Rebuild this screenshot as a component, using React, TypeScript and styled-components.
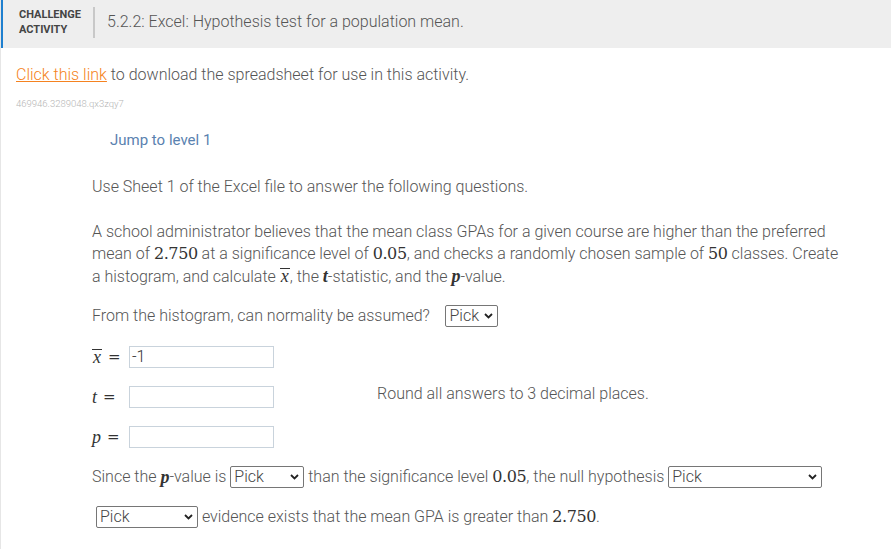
import React from "react";
import styled, { createGlobalStyle } from "styled-components";

const Global = createGlobalStyle`
  html, body { margin: 0; padding: 0; background: #fff; }
  body { font-family: Roboto, "Noto Sans", sans-serif; color: #555; font-weight: 300; }
  * { box-sizing: border-box; }
`;

const Page = styled.div`
  width: 891px;
  height: 549px;
  border-left: 1px solid #e6e6e6;
  overflow: hidden;
`;

const Header = styled.div`
  height: 48px;
  background: #eeeeee;
  border-left: 3px solid #1e7fcf;
  margin-left: -1px;
  display: flex;
  align-items: center;
  padding-left: 16px;
`;

const Label = styled.div`
  font-size: 11px;
  font-weight: 700;
  color: #444;
  line-height: 15px;
  padding-right: 12px;
  margin-top: -4px;
`;

const Divider = styled.div`
  width: 2px;
  height: 31px;
  background: #c8c8c8;
  margin-top: -3px;
`;

const Title = styled.div`
  font-size: 16px;
  font-weight: 300;
  color: #555;
  padding-left: 12px;
  margin-top: -5px;
`;

const Body = styled.div`
  padding: 16px 0 0 15px;
`;

const LinkLine = styled.div`
  font-size: 16px;
  line-height: 22px;
  color: #555;
`;

const Link = styled.a`
  color: #f58220;
  text-decoration: underline;
`;

const Ident = styled.div`
  font-size: 9.5px;
  color: #b5b5b5;
  margin-top: 12px;
`;

const Jump = styled.div`
  font-size: 15px;
  font-weight: 400;
  color: #5a82b0;
  margin: 22px 0 0 94px;
`;

const Content = styled.div`
  margin-left: 76px;
  width: 748px;
  font-size: 16px;
  line-height: 22.5px;
  color: #555;
`;

const Para = styled.p<{ $mt: number }>`
  margin: ${(p) => p.$mt}px 0 0 0;
`;

const Num = styled.span`
  font-family: "DejaVu Serif", "Liberation Serif", serif;
  font-size: 16px;
  line-height: 1;
  font-weight: 400;
  color: #333;
  letter-spacing: -0.4px;
`;

const Var = styled.span<{ $bold?: boolean }>`
  font-family: "Liberation Serif", "DejaVu Serif", serif;
  font-style: italic;
  font-size: 18px;
  line-height: 1;
  font-weight: ${(p) => (p.$bold ? 700 : 400)};
  color: #333;
`;

const Over = styled.span`
  display: inline-block;
  border-top: 1px solid #333;
  line-height: 0.8;
  padding: 0 1px;
`;

const Select = styled.span<{ $w: number }>`
  display: inline-flex;
  align-items: center;
  justify-content: space-between;
  width: ${(p) => p.$w}px;
  height: 22px;
  border: 1px solid #767676;
  border-radius: 2px;
  padding: 0 4px 0 3px;
  font-size: 16px;
  font-weight: 300;
  color: #444;
  vertical-align: middle;
  line-height: 20px;
  background: #fff;
`;

const Chevron = () => (
  <svg width="9" height="6" viewBox="0 0 9 6">
    <path d="M1 1l3.5 3.5L8 1" fill="none" stroke="#222" strokeWidth="1.8" />
  </svg>
);

const Pick = ({ w }: { w: number }) => (
  <Select $w={w}>
    Pick
    <Chevron />
  </Select>
);

const AnswerGrid = styled.div`
  display: grid;
  grid-template-columns: 285px 1fr;
  margin-top: 19px;
`;

const Answers = styled.div`
  display: flex;
  flex-direction: column;
  gap: 18px;
`;

const AnswerRow = styled.div`
  display: flex;
  align-items: center;
  height: 22px;
`;

const Sym = styled.span`
  width: 37px;
  display: inline-flex;
  align-items: center;
  gap: 6px;
  font-family: "Liberation Serif", "DejaVu Serif", serif;
  font-size: 18px;
  font-weight: 400;
  color: #333;
`;

const Eq = styled.span`
  font-family: "DejaVu Serif", serif;
  font-style: normal;
  font-size: 15px;
`;

const Input = styled.div`
  width: 145px;
  height: 22px;
  border: 1px solid #c9d3dc;
  font-size: 16px;
  line-height: 20px;
  padding-left: 2px;
  color: #333;
`;

const Note = styled.div`
  padding-top: 37px;
  font-size: 16px;
  color: #555;
`;

const Sentence = styled.div<{ $mt: number; $ml?: number }>`
  margin-top: ${(p) => p.$mt}px;
  margin-left: ${(p) => p.$ml || 0}px;
  height: 22px;
  display: flex;
  align-items: center;
  white-space: pre;
  font-size: 16px;
  color: #555;
`;

export default function App() {
  return (
    <Page>
      <Global />
      <Header>
        <Label>
          CHALLENGE
          <br />
          ACTIVITY
        </Label>
        <Divider />
        <Title>5.2.2: Excel: Hypothesis test for a population mean.</Title>
      </Header>
      <Body>
        <LinkLine>
          <Link>Click this link</Link> to download the spreadsheet for use in this activity.
        </LinkLine>
        <Ident>469946.3289048.qx3zqy7</Ident>
        <Jump>Jump to level 1</Jump>
        <Content>
          <Para $mt={27}>Use Sheet 1 of the Excel file to answer the following questions.</Para>
          <Para $mt={22}>
            A school administrator believes that the mean class GPAs for a given course are higher than the preferred
            mean of <Num>2.750</Num> at a significance level of <Num>0.05</Num>, and checks a randomly chosen sample
            of <Num>50</Num> classes. Create a histogram, and calculate <Var><Over>x</Over></Var>, the{" "}
            <Var $bold>t</Var>-statistic, and the <Var $bold>p</Var>-value.
          </Para>
          <Sentence $mt={17}>
            {"From the histogram, can normality be assumed?    "}
            <Pick w={53} />
          </Sentence>
          <AnswerGrid>
            <Answers>
              <AnswerRow>
                <Sym>
                  <i><Over>x</Over></i>
                  <Eq>=</Eq>
                </Sym>
                <Input>-1</Input>
              </AnswerRow>
              <AnswerRow>
                <Sym>
                  <i>t</i>
                  <Eq>=</Eq>
                </Sym>
                <Input />
              </AnswerRow>
              <AnswerRow>
                <Sym>
                  <i>p</i>
                  <Eq>=</Eq>
                </Sym>
                <Input />
              </AnswerRow>
            </Answers>
            <Note>Round all answers to 3 decimal places.</Note>
          </AnswerGrid>
          <Sentence $mt={18}>
            {"Since the "}
            <Var $bold>p</Var>
            {"-value is "}
            <Pick w={74} />
            {" than the significance level "}
            <Num>0.05</Num>
            {", the null hypothesis "}
            <Pick w={154} />
          </Sentence>
          <Sentence $mt={18} $ml={4}>
            <Pick w={102} />
            {" evidence exists that the mean GPA is greater than "}
            <Num>2.750</Num>.
          </Sentence>
        </Content>
      </Body>
    </Page>
  );
}
